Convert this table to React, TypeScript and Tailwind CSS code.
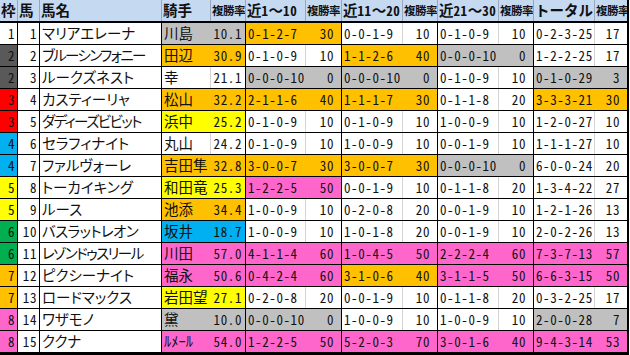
import React from 'react';

type C = 'w' | 'g' | 'o' | 'y' | 'p' | 'b';

const BG: Record<C, string> = {
  w: 'bg-white',
  g: 'bg-[#c0c0c0]',
  o: 'bg-[#ffc000]',
  y: 'bg-[#ffff00]',
  p: 'bg-[#ff66cc]',
  b: 'bg-[#00b0f0]',
};

// gridlines vanish under a fill, so the inner line takes the fill colour
const INNER: Record<C, string> = {
  w: 'border-r-[#d4d4d4]',
  g: 'border-r-[#c0c0c0]',
  o: 'border-r-[#ffc000]',
  y: 'border-r-[#ffff00]',
  p: 'border-r-[#ff66cc]',
  b: 'border-r-[#00b0f0]',
};

const WAKU: Record<number, string> = {
  1: 'bg-white',
  2: 'bg-[#595959]',
  3: 'bg-[#ff0000]',
  4: 'bg-[#00b0f0]',
  5: 'bg-[#ffff00]',
  6: 'bg-[#00b050]',
  7: 'bg-[#ffc000]',
  8: 'bg-[#ff66cc]',
};

type Rec = [string, string, C];

const ROWS: { w: number; n: number; name: string; j: string; jc: C; r: string; c: Rec[] }[] = [
  { w: 1, n: 1, name: 'マリアエレーナ', j: '川島', jc: 'g', r: '10.1', c: [['0-1-2-7', '30', 'o'], ['0-0-1-9', '10', 'w'], ['0-1-0-9', '10', 'w'], ['0-2-3-25', '17', 'w']] },
  { w: 2, n: 2, name: 'ブルーシンフォニー', j: '田辺', jc: 'o', r: '30.9', c: [['0-1-0-9', '10', 'w'], ['1-1-2-6', '40', 'o'], ['0-0-0-10', '0', 'g'], ['1-2-2-25', '17', 'w']] },
  { w: 2, n: 3, name: 'ルークズネスト', j: '幸', jc: 'w', r: '21.1', c: [['0-0-0-10', '0', 'g'], ['0-0-0-10', '0', 'g'], ['0-1-0-9', '10', 'w'], ['0-1-0-29', '3', 'g']] },
  { w: 3, n: 4, name: 'カスティーリャ', j: '松山', jc: 'o', r: '32.2', c: [['2-1-1-6', '40', 'o'], ['1-1-1-7', '30', 'o'], ['0-1-1-8', '20', 'w'], ['3-3-3-21', '30', 'o']] },
  { w: 3, n: 5, name: 'ダディーズビビット', j: '浜中', jc: 'y', r: '25.2', c: [['0-1-0-9', '10', 'w'], ['0-1-0-9', '10', 'w'], ['1-0-0-9', '10', 'w'], ['1-2-0-27', '10', 'w']] },
  { w: 4, n: 6, name: 'セラフィナイト', j: '丸山', jc: 'w', r: '24.2', c: [['0-1-0-9', '10', 'w'], ['1-0-0-9', '10', 'w'], ['0-0-1-9', '10', 'w'], ['1-1-1-27', '10', 'w']] },
  { w: 4, n: 7, name: 'ファルヴォーレ', j: '吉田隼', jc: 'o', r: '32.8', c: [['3-0-0-7', '30', 'o'], ['3-0-0-7', '30', 'o'], ['0-0-0-10', '0', 'g'], ['6-0-0-24', '20', 'w']] },
  { w: 5, n: 8, name: 'トーカイキング', j: '和田竜', jc: 'y', r: '25.3', c: [['1-2-2-5', '50', 'p'], ['0-0-1-9', '10', 'w'], ['0-1-1-8', '20', 'w'], ['1-3-4-22', '27', 'w']] },
  { w: 5, n: 9, name: 'ルース', j: '池添', jc: 'o', r: '34.4', c: [['1-0-0-9', '10', 'w'], ['0-2-0-8', '20', 'w'], ['0-0-1-9', '10', 'w'], ['1-2-1-26', '13', 'w']] },
  { w: 6, n: 10, name: 'バスラットレオン', j: '坂井', jc: 'b', r: '18.7', c: [['1-0-0-9', '10', 'w'], ['1-0-1-8', '20', 'w'], ['0-0-1-9', '10', 'w'], ['2-0-2-26', '13', 'w']] },
  { w: 6, n: 11, name: 'レゾンドゥスリール', j: '川田', jc: 'p', r: '57.0', c: [['4-1-1-4', '60', 'p'], ['1-0-4-5', '50', 'p'], ['2-2-2-4', '60', 'p'], ['7-3-7-13', '57', 'p']] },
  { w: 7, n: 12, name: 'ピクシーナイト', j: '福永', jc: 'p', r: '50.6', c: [['0-4-2-4', '60', 'p'], ['3-1-0-6', '40', 'o'], ['3-1-1-5', '50', 'p'], ['6-6-3-15', '50', 'p']] },
  { w: 7, n: 13, name: 'ロードマックス', j: '岩田望', jc: 'y', r: '27.1', c: [['0-2-0-8', '20', 'w'], ['0-0-1-9', '10', 'w'], ['0-1-1-8', '20', 'w'], ['0-3-2-25', '17', 'w']] },
  { w: 8, n: 14, name: 'ワザモノ', j: '黛', jc: 'g', r: '10.0', c: [['0-0-0-10', '0', 'g'], ['1-0-0-9', '10', 'w'], ['1-0-0-9', '10', 'w'], ['2-0-0-28', '7', 'g']] },
  { w: 8, n: 15, name: 'ククナ', j: 'ﾙﾒｰﾙ', jc: 'p', r: '54.0', c: [['1-2-2-5', '50', 'p'], ['5-2-0-3', '70', 'p'], ['3-0-1-6', '40', 'p'], ['9-4-3-14', '53', 'p']] },
];

const GRID = 'grid grid-cols-[18px_22px_122px_49px_35px_60px_36px_61px_35px_61px_35px_61px_34px]';
const NUM = "[font-feature-settings:'hwid'] text-[13px] tracking-[0.6px]";
const JP = "text-[14.5px] [font-feature-settings:'palt']";

const H = ({ children, last }: { children: React.ReactNode; last?: boolean }) => (
  <div
    className={`flex items-center overflow-hidden whitespace-nowrap font-bold pl-[1px] ${
      last ? 'border-r-2 border-r-black' : 'border-r border-r-[#9aa6b8]'
    }`}
  >
    {children}
  </div>
);

const Num = ({ t }: { t: string }) => <span className={NUM}>{t}</span>;

const HeadRate = ({ last }: { last?: boolean }) => (
  <H last={last}>
    <span className="text-[11.5px] tracking-[-0.5px]">複勝率</span>
  </H>
);

export default function App() {
  return (
    <div className="w-[630px] h-[355px] bg-white text-[#111] font-['Noto_Sans_CJK_JP',sans-serif] leading-none">
      <div className="border-b-2 border-b-black w-[629px]">
        <div className={`${GRID} h-[23px] bg-[#c5d9f1] border-b-2 border-b-black text-[14.5px]`}>
          <H>枠</H>
          <H>馬</H>
          <H>馬名</H>
          <H>騎手</H>
          <HeadRate />
          <H>近<Num t="1" />～<Num t="10" /></H>
          <HeadRate />
          <H>近<Num t="11" />～<Num t="20" /></H>
          <HeadRate />
          <H>近<Num t="21" />～<Num t="30" /></H>
          <HeadRate />
          <H>トータル</H>
          <HeadRate last />
        </div>

        {ROWS.map((row) => (
          <div key={row.n} className={`${GRID} h-[22px] border-b border-b-black`}>
            <div className={`flex items-center justify-end pr-[2px] border-r border-r-black ${WAKU[row.w]} ${NUM}`}>
              {row.w}
            </div>
            <div className={`flex items-center justify-end pr-[2px] border-r border-r-black ${NUM}`}>{row.n}</div>
            <div
              className={`flex items-center pl-[2px] overflow-hidden whitespace-nowrap border-r border-r-black ${JP} ${
                row.name.length > 8 ? 'tracking-[-1.6px]' : row.name.length > 7 ? 'tracking-[-0.6px]' : ''
              }`}
            >
              {row.name}
            </div>
            <div className={`flex items-center pl-[2px] whitespace-nowrap border-r ${BG[row.jc]} ${INNER[row.jc]} ${JP}`}>
              {row.j}
            </div>
            <div className={`flex items-center justify-end pr-[3px] border-r border-r-black ${BG[row.jc]} ${NUM}`}>
              {row.r}
            </div>
            {row.c.map(([rec, pct, col], i) => (
              <React.Fragment key={i}>
                <div className={`flex items-center pl-[2px] whitespace-nowrap border-r ${BG[col]} ${INNER[col]} ${NUM}`}>
                  {rec}
                </div>
                <div
                  className={`flex items-center justify-end pr-[7px] ${BG[col]} ${NUM} ${
                    i === 3 ? 'border-r-2 border-r-black' : 'border-r border-r-black'
                  }`}
                >
                  {pct}
                </div>
              </React.Fragment>
            ))}
          </div>
        ))}
      </div>
    </div>
  );
}
